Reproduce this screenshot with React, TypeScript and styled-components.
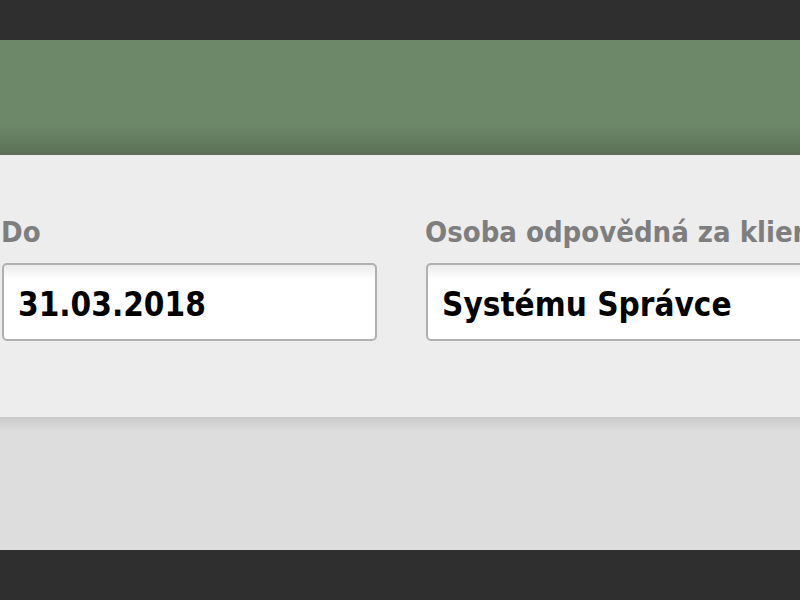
import React from "react";
import styled, { createGlobalStyle } from "styled-components";

const GlobalStyle = createGlobalStyle`
  html, body {
    margin: 0;
    padding: 0;
    width: 800px;
    height: 600px;
    overflow: hidden;
    background: #2f2f2f;
  }
  * { box-sizing: border-box; }
`;

const Page = styled.div`
  width: 800px;
  height: 600px;
  display: flex;
  flex-direction: column;
  overflow: hidden;
  font-family: "DejaVu Sans Condensed", "DejaVu Sans", sans-serif;
  font-weight: bold;
`;

const DarkBar = styled.div<{ $h: number }>`
  height: ${(p) => p.$h}px;
  flex: none;
  background: #2f2f2f;
`;

const Header = styled.div`
  height: 115px;
  flex: none;
  background: linear-gradient(
    to bottom,
    #6c8868 0px,
    #6c8868 84px,
    #62795e 105px,
    #5b6e57 115px
  );
`;

const Panel = styled.div`
  height: 262px;
  flex: none;
  background: #ededed;
  padding: 60px 0 0 2px;
  overflow: hidden;
`;

const Row = styled.div`
  display: flex;
  gap: 49px;
  white-space: nowrap;
`;

const Field = styled.div<{ $w: number }>`
  width: ${(p) => p.$w}px;
  flex: none;
  display: flex;
  flex-direction: column;
  gap: 14px;
`;

const Label = styled.div`
  font-size: 29px;
  line-height: 34px;
  color: #7e7e7e;
  margin-left: -1px;
`;

const Input = styled.div`
  height: 78px;
  border: 2px solid #b0b0b0;
  border-radius: 5px;
  background: linear-gradient(to bottom, #ebebeb 0px, #ffffff 14px);
  display: flex;
  align-items: center;
  padding: 5px 13px 0 14px;
  font-size: 33px;
  line-height: 38px;
  color: #000;
`;

const Footer = styled.div`
  height: 133px;
  flex: none;
  background: linear-gradient(to bottom, #c9c9c9 0px, #dddddd 14px);
`;

export default function App() {
  return (
    <>
      <GlobalStyle />
      <Page>
        <DarkBar $h={40} />
        <Header />
        <Panel>
          <Row>
            <Field $w={375}>
              <Label>Do</Label>
              <Input>31.03.2018</Input>
            </Field>
            <Field $w={420}>
              <Label>Osoba odpovědná za klienta</Label>
              <Input>Systému Správce</Input>
            </Field>
          </Row>
        </Panel>
        <Footer />
        <DarkBar $h={50} />
      </Page>
    </>
  );
}
